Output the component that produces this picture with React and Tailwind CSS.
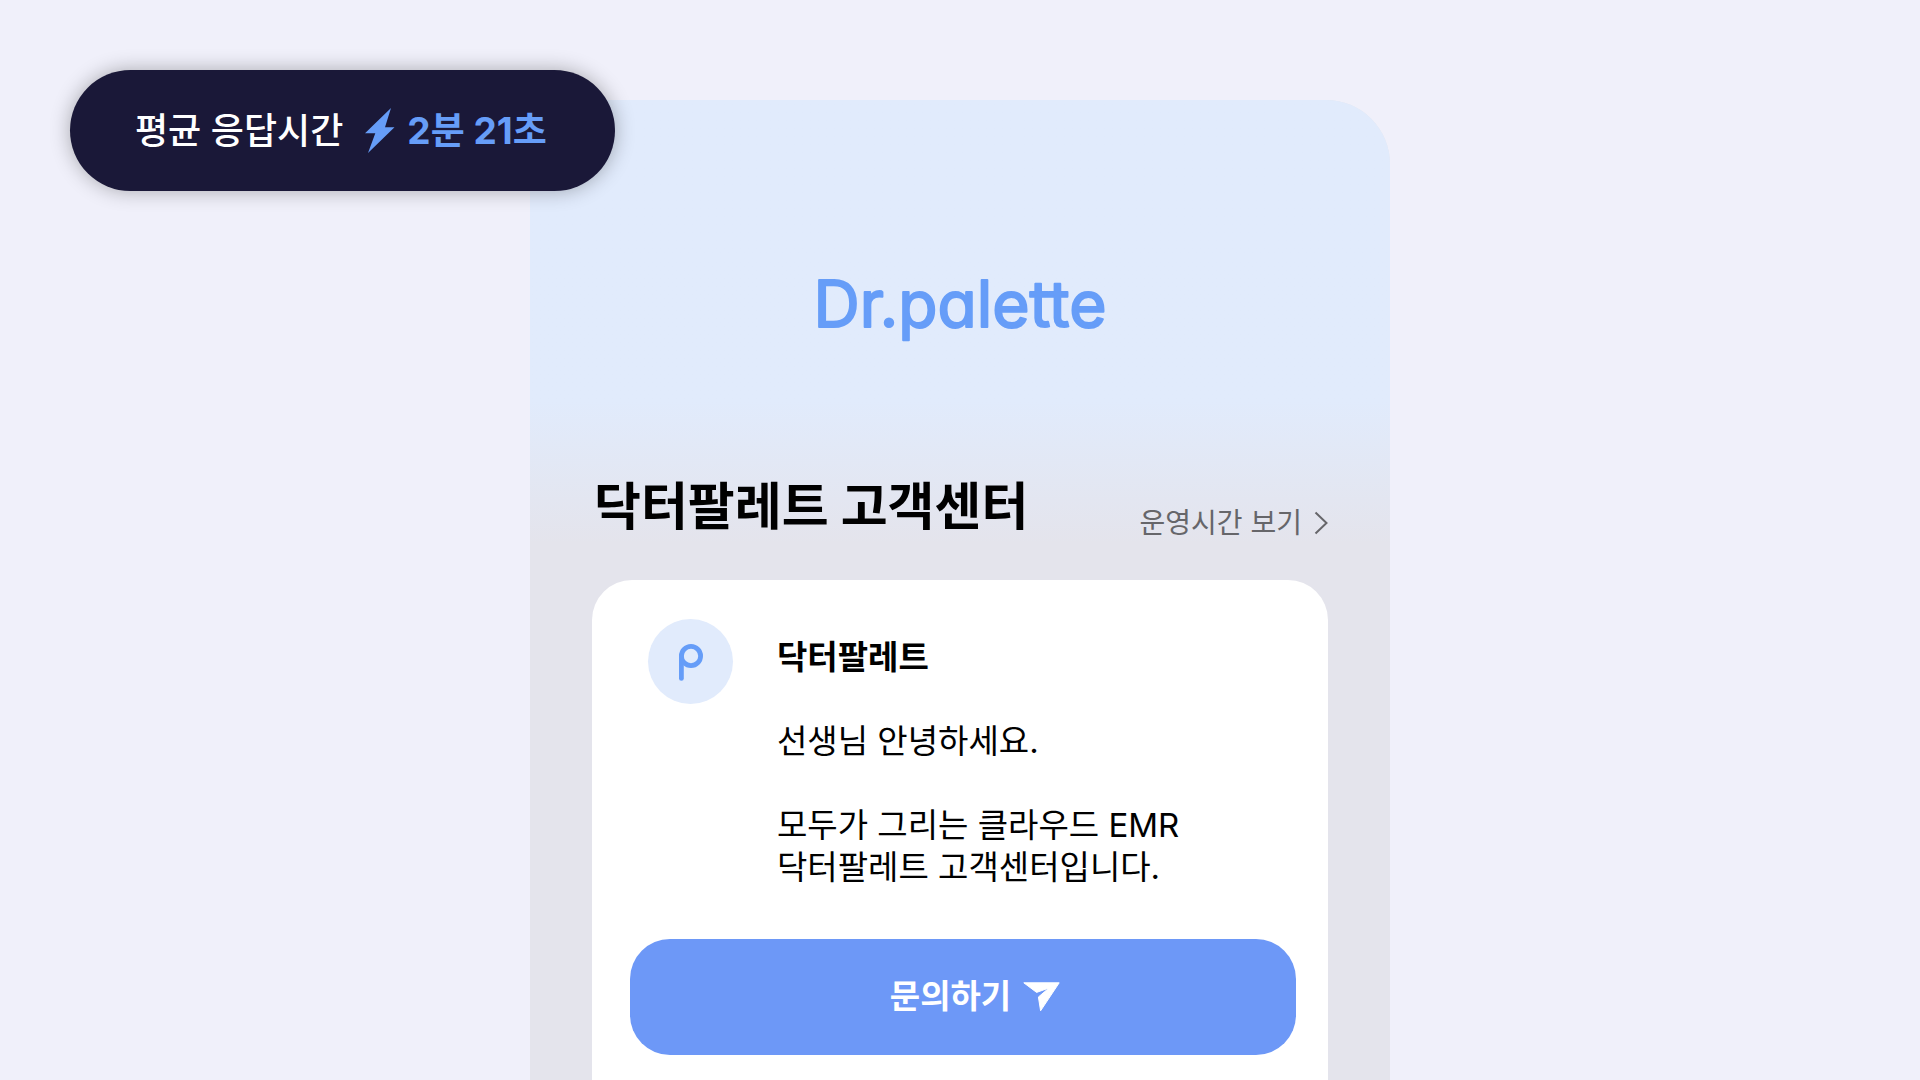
import React from "react";

const LogoText = () => (
  <svg viewBox="0 0 300 90" className="mx-auto h-[90px] w-[300px]" role="img" aria-label="Dr.palette">
    <text
      x="150"
      y="62"
      textAnchor="middle"
      fill="#669df8"
      stroke="#669df8"
      strokeWidth="2"
      strokeLinejoin="round"
      className="font-['Inter',sans-serif] text-[64px] font-normal [font-feature-settings:'cv11']"
    >
      Dr.palette
    </text>
  </svg>
);

const BoltIcon = () => (
  <svg viewBox="0 0 30 45" className="h-[45px] w-[30px]" fill="#669df8" aria-hidden="true">
    <path d="M26 0 20 19.3H29.5L3 45 10.3 25.3H0Z" />
  </svg>
);

const SendIcon = () => (
  <svg viewBox="0 0 37 30" className="h-[30px] w-[37px]" fill="#fff" stroke="#fff" strokeLinejoin="round" aria-hidden="true">
    <path d="M.8.8H36.2L17.6 28.8 15.4 15 26 6 13.6 10.4Z" />
  </svg>
);

const ChevronIcon = () => (
  <svg viewBox="0 0 14 24" className="h-6 w-[14px]" fill="none" stroke="#66666a" strokeWidth="2" aria-hidden="true">
    <path d="M1.5 1.5 12.5 12 1.5 22.5" />
  </svg>
);

const Avatar = () => (
  <div className="flex size-[85px] shrink-0 items-center justify-center rounded-full bg-[#e1ebfc]">
    <svg viewBox="0 0 24 38" className="h-[38px] w-6" fill="none" stroke="#669df8" strokeWidth="4.8" strokeLinecap="round" aria-hidden="true">
      <circle cx="12" cy="13" r="9.6" />
      <path d="M2.4 13V35.4" />
    </svg>
  </div>
);

const ResponseTime = () => (
  <div className="absolute top-[70px] left-[70px] flex h-[121px] w-[545px] items-center rounded-full bg-[#1a1838] pl-[65px] text-4xl shadow-[0_0_20px_rgba(0,0,0,0.3)]">
    <span className="font-medium text-white">평균 응답시간</span>
    <span className="ml-[22px] flex items-center gap-3 text-[37px] font-bold text-[#669df8]">
      <BoltIcon />
      2분 21초
    </span>
  </div>
);

const App = () => {
  return (
    <main className="relative h-screen overflow-hidden bg-[#f0f0fa] pt-[100px] font-['Inter','Noto_Sans_CJK_KR',sans-serif] text-black">
      <section className="mx-auto min-h-full w-[860px] rounded-t-[64px] bg-[#e4e4ec]">
        <header className="rounded-t-[64px] bg-linear-to-b from-[#e1ebfc] from-68% to-[#e4e4ec] px-[62px] pt-[165px]">
          <LogoText />
          <div className="mt-[116px] flex items-end justify-between">
            <h1 className="pl-0.5 text-[51px] leading-[72px] font-bold">닥터팔레트 고객센터</h1>
            <a href="#hours" className="flex items-center gap-3 text-[28px] leading-10 text-[#66666a]">
              운영시간 보기
              <ChevronIcon />
            </a>
          </div>
        </header>

        <article className="mx-[62px] mt-[37px] rounded-t-[40px] bg-white pt-[39px] pr-8 pb-10 pl-[38px]">
          <div className="flex gap-11 pl-[18px]">
            <Avatar />
            <div className="pt-[17px] text-[33px] leading-[42px]">
              <h2 className="font-semibold">닥터팔레트</h2>
              <p className="mt-[42px]">선생님 안녕하세요.</p>
              <p className="mt-[42px]">
                모두가 그리는 클라우드 EMR
                <br />
                닥터팔레트 고객센터입니다.
              </p>
            </div>
          </div>
          <button
            type="button"
            className="mt-[51px] flex h-[116px] w-full items-center justify-center gap-3 rounded-[40px] bg-[#6d98f7] pl-6 text-[33px] font-bold text-white"
          >
            문의하기
            <SendIcon />
          </button>
        </article>
      </section>

      <ResponseTime />
    </main>
  );
};

export default App;
